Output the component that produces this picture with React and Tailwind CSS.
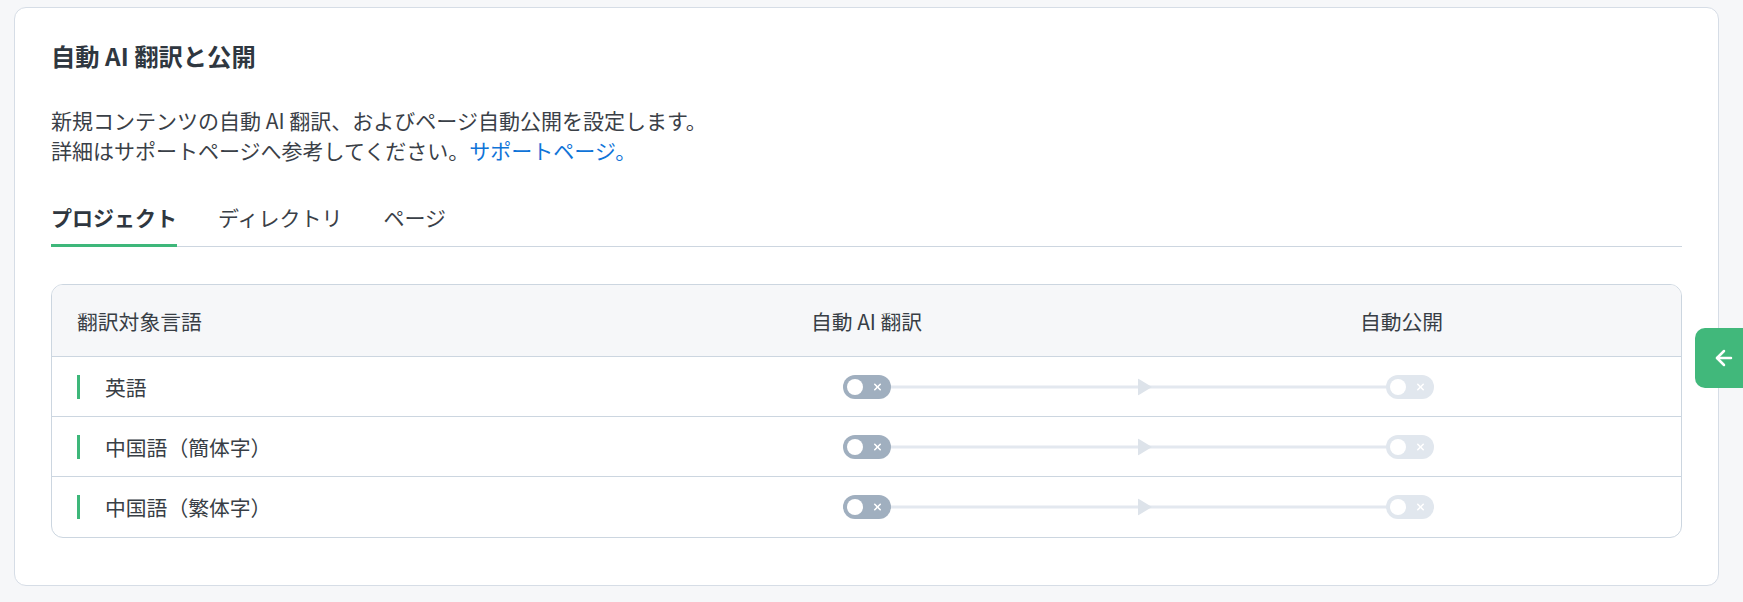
import React from "react";
import { ArrowLeft, X } from "lucide-react";

const FONT = {
  fontFamily: '"Noto Sans CJK JP", "Noto Sans", sans-serif',
};

function Toggle({ dim }) {
  return (
    <div
      className={`relative w-[48px] h-[24px] rounded-full flex items-center ${
        dim ? "bg-[#e1e7ee]" : "bg-[#a0afbf]"
      }`}
    >
      <div className="ml-[4px] w-[16px] h-[16px] rounded-full bg-white" />
      <X
        size={11}
        strokeWidth={3.5}
        className="absolute left-[29px] top-1/2 -translate-y-1/2 text-white"
      />
    </div>
  );
}

function Row({ label, last }) {
  return (
    <div
      className={`grid grid-cols-3 h-[60px] ${
        last ? "" : "border-b border-[#ccd6e0]"
      }`}
    >
      <div className="flex items-center pl-[25px]">
        <div className="w-[3px] h-[24px] bg-[#3eb77a]" />
        <span className="ml-[25px] text-[20.8px] text-[#383e45] leading-[30px]">
          {label}
        </span>
      </div>
      <div className="col-span-2 relative flex items-center">
        <div className="absolute left-1/4 right-1/4 top-1/2 -translate-y-1/2 h-[3px] bg-[#e3e8ef]" />
        <svg
          className="absolute left-1/2 top-1/2 -translate-y-1/2"
          width="14"
          height="17"
          viewBox="0 0 14 17"
        >
          <polygon points="0,0 14,8.5 0,17" fill="#dde3ea" />
        </svg>
        <div className="relative grid grid-cols-2 w-full justify-items-center">
          <Toggle />
          <Toggle dim />
        </div>
      </div>
    </div>
  );
}

export default function App() {
  return (
    <div
      className="relative w-full h-[602px] bg-[#f6f7f9] pt-[7px] pl-[14px] pr-[24px] overflow-hidden"
      style={FONT}
    >
      <div className="bg-white border border-[#d6dde6] rounded-[12px] pt-[32px] px-[36px] h-[579px]">
        <h1 className="text-[24.3px] leading-[32px] font-bold text-[#2f3740]">
          自動 AI 翻訳と公開
        </h1>
        <p className="mt-[33px] text-[21px] leading-[30px] text-[#3a4047]">
          新規コンテンツの自動 AI 翻訳、およびページ自動公開を設定します。
          <br />
          詳細はサポートページへ参考してください。
          <a className="text-[#0f74d8]">サポートページ。</a>
        </p>

        <div className="mt-[37px] flex gap-[41px] border-b border-[#cdd6e0]">
          <div className="-mb-px pb-[12px] border-b-[3px] border-[#3eb77a] text-[21px] leading-[30px] font-bold text-[#2f3740]">
            プロジェクト
          </div>
          <div className="-mb-px pb-[12px] border-b-[3px] border-transparent text-[21px] leading-[30px] text-[#3a4047]">
            ディレクトリ
          </div>
          <div className="-mb-px pb-[12px] border-b-[3px] border-transparent text-[21px] leading-[30px] text-[#3a4047]">
            ページ
          </div>
        </div>

        <div className="mt-[37px] border border-[#ccd6e0] rounded-[12px] overflow-hidden">
          <div className="grid grid-cols-3 h-[72px] bg-[#f6f7f9] border-b border-[#ccd6e0] text-[20.8px] leading-[30px] text-[#383e45]">
            <div className="flex items-center pl-[25px]">翻訳対象言語</div>
            <div className="flex items-center justify-center">自動 AI 翻訳</div>
            <div className="flex items-center justify-center pr-[16px]">
              自動公開
            </div>
          </div>
          <Row label="英語" />
          <Row label="中国語（簡体字）" />
          <Row label="中国語（繁体字）" last />
        </div>
      </div>

      <div className="absolute right-0 top-[328px] w-[48px] h-[60px] rounded-l-[10px] bg-[#41b87b] flex items-center pl-[17px]">
        <ArrowLeft size={24} strokeWidth={2.5} className="text-white" />
      </div>
    </div>
  );
}
